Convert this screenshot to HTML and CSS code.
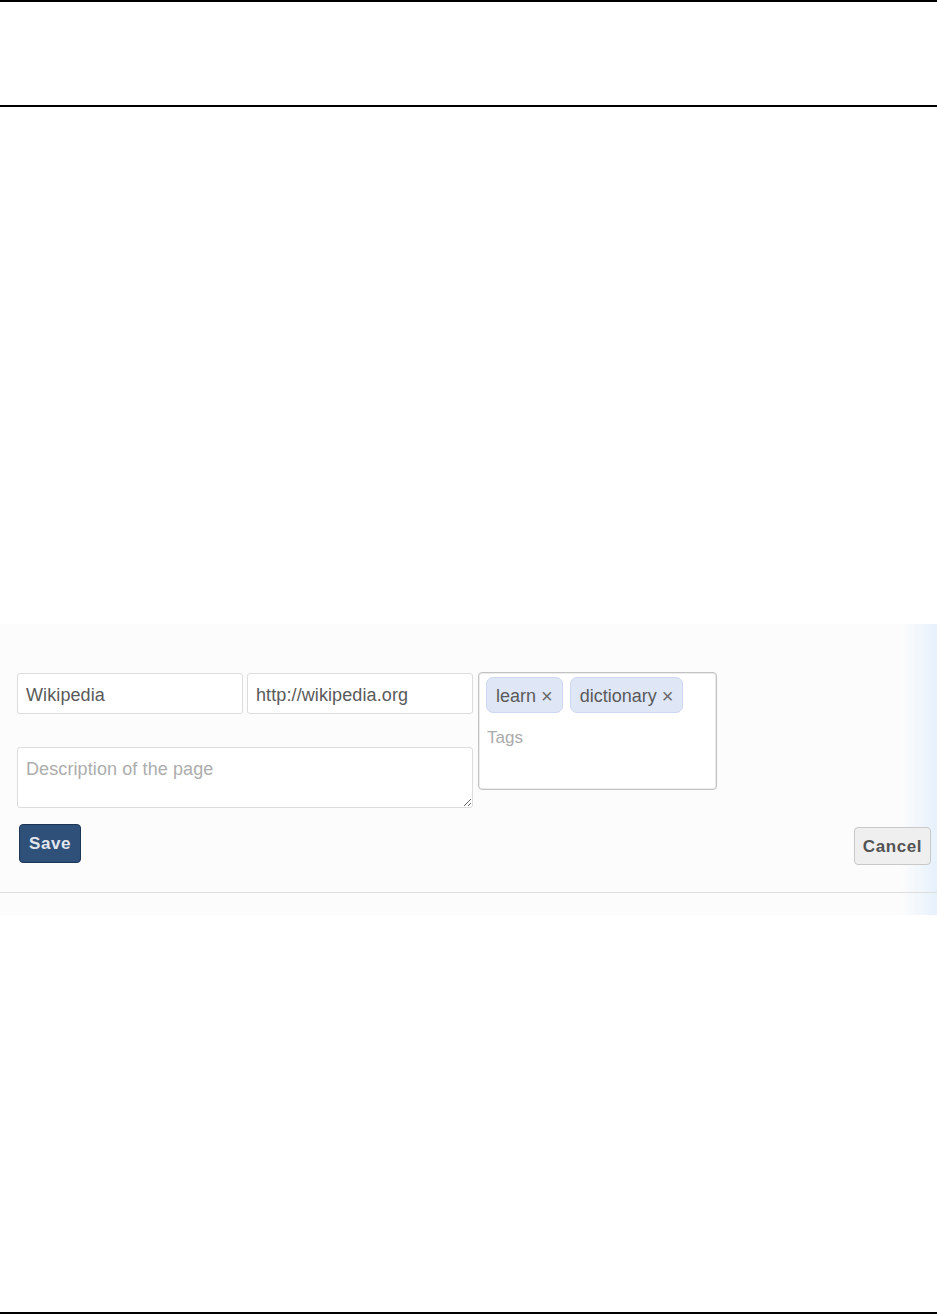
FILE: index.html
```html
<!DOCTYPE html>
<html lang="en">
<head>
<meta charset="utf-8">
<title>Bookmark editor</title>
<link rel="stylesheet" href="styles.css">
</head>
<body>
<div class="frame-top"></div>
<section class="panel">
  <form class="panel-body">
    <div class="fields">
      <div class="left-col">
        <div class="input-row">
          <input class="field" type="text" value="Wikipedia">
          <input class="field" type="text" value="http://wikipedia.org">
        </div>
        <textarea class="field desc" placeholder="Description of the page"></textarea>
      </div>
      <div class="tags-box">
        <div class="chips">
          <span class="chip">learn <span class="x">×</span></span>
          <span class="chip">dictionary <span class="x">×</span></span>
        </div>
        <div class="tags-placeholder">Tags</div>
      </div>
    </div>
    <div class="actions">
      <button type="button" class="btn btn-save">Save</button>
      <button type="button" class="btn btn-cancel">Cancel</button>
    </div>
  </form>
  <div class="panel-foot"></div>
</section>
<div class="frame-bottom"></div>
</body>
</html>
```

FILE: styles.css
```css
html, body {
  margin: 0;
  padding: 0;
  background: #ffffff;
}
body {
  font-family: "Liberation Sans", Arial, sans-serif;
  width: 937px;
  height: 1314px;
  position: relative;
  overflow: hidden;
}
.frame-top {
  height: 103px;
  border-top: 2px solid #000;
  border-bottom: 2px solid #000;
}
.panel {
  margin-top: 517px;
  background: linear-gradient(to right, #fcfcfc 0, #fcfcfc calc(100% - 36px), #e6f1fc 100%);
}
.panel-body {
  box-sizing: border-box;
  height: 269px;
  padding: 48px 6px 0 17px;
  border-bottom: 1px solid #dedede;
  display: flex;
  flex-direction: column;
}
.fields {
  display: flex;
  gap: 5px;
  align-items: flex-start;
}
.left-col {
  width: 456px;
  display: flex;
  flex-direction: column;
  gap: 33px;
  padding-top: 1px;
}
.input-row {
  display: flex;
  gap: 4px;
}
.field {
  box-sizing: border-box;
  width: 226px;
  height: 41px;
  margin: 0;
  background: #fff;
  border: 1px solid #dcdcdc;
  border-radius: 3px;
  padding: 3px 8px 0 8px;
  font-family: "Liberation Sans", Arial, sans-serif;
  font-size: 18px;
  letter-spacing: 0.1px;
  color: #5a5a5a;
  outline: none;
}
.field.desc {
  width: 456px;
  height: 61px;
  padding: 11px 8px 8px 8px;
  resize: vertical;
  display: block;
}
.field::placeholder {
  color: #adadad;
}
.tags-box {
  box-sizing: border-box;
  width: 239px;
  height: 118px;
  background: #fff;
  border: 1px solid #c2c2c2;
  border-radius: 4px;
  box-shadow: inset 0 0 0 1px #ececec;
  padding: 4px 7px;
}
.chips {
  display: flex;
  gap: 7px;
}
.chip {
  box-sizing: border-box;
  height: 36px;
  display: inline-flex;
  align-items: center;
  padding: 2px 9px 0 9px;
  background: #dfe7f6;
  border: 1px solid #cad8f1;
  border-radius: 7px;
  font-size: 18px;
  color: #5a5a5a;
  white-space: pre;
}
.chip .x {
  color: #6a6a6a;
  font-size: 20px;
  line-height: 1;
}
.tags-placeholder {
  margin-top: 15px;
  padding-left: 1px;
  font-size: 17px;
  color: #aaa;
}
.actions {
  display: flex;
  justify-content: space-between;
  align-items: flex-start;
  margin-top: 16px;
}
.btn {
  box-sizing: border-box;
  margin: 0;
  font-family: "Liberation Sans", Arial, sans-serif;
  font-weight: bold;
  font-size: 17px;
  letter-spacing: 0.6px;
  border-radius: 4px;
  cursor: pointer;
}
.btn-save {
  margin-left: 2px;
  width: 62px;
  height: 39px;
  background: #2f5179;
  border: 1px solid #1e3656;
  color: #e2e7ef;
}
.btn-cancel {
  margin-top: 3px;
  width: 77px;
  height: 38px;
  padding-top: 2px;
  background: #efefef;
  border: 1px solid #c9c9c9;
  color: #545454;
}
.panel-foot {
  height: 22px;
}
.frame-bottom {
  position: absolute;
  left: 0;
  right: 0;
  bottom: 0;
  height: 2px;
  background: #000;
}
```
